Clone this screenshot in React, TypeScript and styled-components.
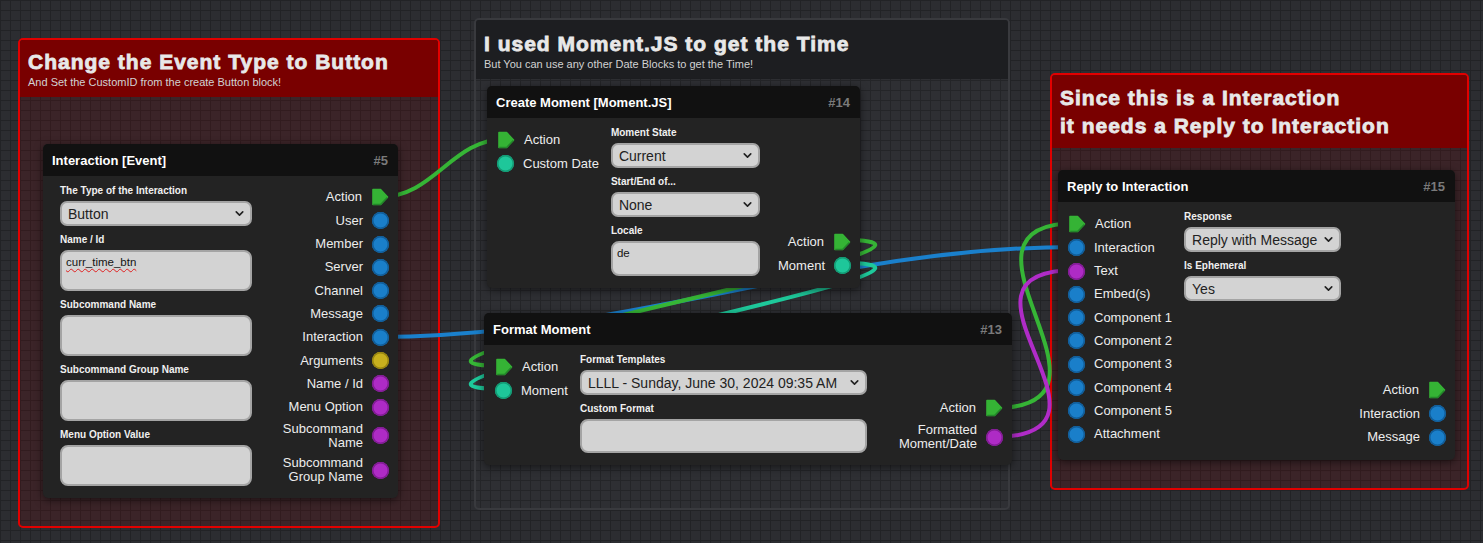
import React from 'react'
import styled, { createGlobalStyle } from 'styled-components'
import { ChevronDown } from 'lucide-react'

const FONT = `'Liberation Sans', Arial, sans-serif`

const GlobalStyle = createGlobalStyle`
  html, body {
    margin: 0;
    padding: 0;
    background: #292a2e;
  }
  body {
    font-family: ${FONT};
  }
`

type Kind = 'action' | 'blue' | 'teal' | 'purple' | 'yellow'

interface Pin {
  label: string
  kind: Kind
}

interface Field {
  label: string
  type: 'select' | 'text'
  value?: string
  height?: number
  misspelled?: boolean
}

const PIN_COLORS: Record<Exclude<Kind, 'action'>, [string, string]> = {
  blue: ['#1a7fca', '#115d99'],
  teal: ['#1ec79a', '#139a74'],
  purple: ['#ae2bc5', '#821c95'],
  yellow: ['#c8b01e', '#978410'],
}

const WIRE = {
  green: '#36b536',
  blue: '#1a80cc',
  teal: '#1ec99b',
  purple: '#b02cc8',
}

const interactionOutputs: Pin[] = [
  { label: 'Action', kind: 'action' },
  { label: 'User', kind: 'blue' },
  { label: 'Member', kind: 'blue' },
  { label: 'Server', kind: 'blue' },
  { label: 'Channel', kind: 'blue' },
  { label: 'Message', kind: 'blue' },
  { label: 'Interaction', kind: 'blue' },
  { label: 'Arguments', kind: 'yellow' },
  { label: 'Name / Id', kind: 'purple' },
  { label: 'Menu Option', kind: 'purple' },
  { label: 'Subcommand\nName', kind: 'purple' },
  { label: 'Subcommand\nGroup Name', kind: 'purple' },
]

const interactionFields: Field[] = [
  { label: 'The Type of the Interaction', type: 'select', value: 'Button' },
  { label: 'Name / Id', type: 'text', value: 'curr_time_btn', height: 41, misspelled: true },
  { label: 'Subcommand Name', type: 'text', height: 41 },
  { label: 'Subcommand Group Name', type: 'text', height: 41 },
  { label: 'Menu Option Value', type: 'text', height: 41 },
]

const replyInputs: Pin[] = [
  { label: 'Action', kind: 'action' },
  { label: 'Interaction', kind: 'blue' },
  { label: 'Text', kind: 'purple' },
  { label: 'Embed(s)', kind: 'blue' },
  { label: 'Component 1', kind: 'blue' },
  { label: 'Component 2', kind: 'blue' },
  { label: 'Component 3', kind: 'blue' },
  { label: 'Component 4', kind: 'blue' },
  { label: 'Component 5', kind: 'blue' },
  { label: 'Attachment', kind: 'blue' },
]

function wirePath(x1: number, y1: number, x2: number, y2: number, d: number) {
  return `M${x1} ${y1} C${x1 + d} ${y1}, ${x2 - d} ${y2}, ${x2} ${y2}`
}

const Socket: React.FC<{ kind: Kind }> = ({ kind }) => {
  if (kind === 'action') {
    return (
      <PinSvg width="18" height="18" viewBox="0 0 18 18">
        <path d="M2 1.5 H9.5 L16.5 9 L9.5 16.5 H2 Z" fill="#35b335" stroke="#35b335" strokeWidth="1.6" strokeLinejoin="round" />
        <path d="M16.3 9.4 L9.6 16.4 H2.2" fill="none" stroke="#23862a" strokeWidth="1.4" strokeLinejoin="round" />
      </PinSvg>
    )
  }
  const [fill, rim] = PIN_COLORS[kind]
  return <Dot $fill={fill} $rim={rim} />
}

const PinList: React.FC<{ pins: Pin[]; out?: boolean }> = ({ pins, out }) => (
  <>
    {pins.map((pin, i) => (
      <PinRow key={i}>
        {!out && <Socket kind={pin.kind} />}
        <PinLabel $out={out}>{pin.label}</PinLabel>
        {out && <Socket kind={pin.kind} />}
      </PinRow>
    ))}
  </>
)

const FieldList: React.FC<{ fields: Field[] }> = ({ fields }) => (
  <>
    {fields.map((f, i) => (
      <FieldGroup key={i}>
        <FieldLabel>{f.label}</FieldLabel>
        {f.type === 'select' ? (
          <SelectWrap>
            <Select defaultValue={f.value}>
              <option>{f.value}</option>
            </Select>
            <Caret size={13} strokeWidth={3} />
          </SelectWrap>
        ) : (
          <TextBox $h={f.height || 35}>
            {f.misspelled ? <Misspelled>{f.value}</Misspelled> : f.value}
          </TextBox>
        )}
      </FieldGroup>
    ))}
  </>
)

interface NodeProps {
  id: number
  title: string
  x: number
  y: number
  w: number
  padLeft: number
  fieldsW: number
  inputs?: Pin[]
  fields: Field[]
  outputs: Pin[]
}

const FlowNode: React.FC<NodeProps> = ({ id, title, x, y, w, padLeft, fieldsW, inputs, fields, outputs }) => (
  <NodeBox $x={x} $y={y} $w={w}>
    <NodeHeader>
      <NodeTitle>{title}</NodeTitle>
      <NodeId>#{id}</NodeId>
    </NodeHeader>
    <NodeBody $pl={padLeft}>
      {inputs && (
        <InputCol>
          <PinList pins={inputs} />
        </InputCol>
      )}
      <FieldCol $w={fieldsW}>
        <FieldList fields={fields} />
      </FieldCol>
      <OutputCol>
        <PinList pins={outputs} out />
      </OutputCol>
    </NodeBody>
  </NodeBox>
)

const App: React.FC = () => {
  return (
    <>
      <GlobalStyle />
      <Canvas>
        <Group $x={18} $y={38} $w={422} $h={490} $red>
          <GroupHeader $red $h={57} $pt={10}>
            <GroupTitle>Change the Event Type to Button</GroupTitle>
            <GroupSubtitle>And Set the CustomID from the create Button block!</GroupSubtitle>
          </GroupHeader>
        </Group>

        <Group $x={474} $y={18} $w={536} $h={492}>
          <GroupHeader $h={59} $pt={12}>
            <GroupTitle>I used Moment.JS to get the Time</GroupTitle>
            <GroupSubtitle>But You can use any other Date Blocks to get the Time!</GroupSubtitle>
          </GroupHeader>
        </Group>

        <Group $x={1050} $y={73} $w={419} $h={417} $red>
          <GroupHeader $red $h={73} $pt={9}>
            <GroupTitle $tall>
              Since this is a Interaction
              <br />
              it needs a Reply to Interaction
            </GroupTitle>
          </GroupHeader>
        </Group>

        <Wires viewBox="0 0 1483 543">
          <path d={wirePath(380, 197, 506, 139, 55)} stroke={WIRE.green} />
          <path d={wirePath(378, 337, 1076, 247, 250)} stroke={WIRE.blue} />
          <path d={wirePath(843, 240, 503, 366, 190)} stroke={WIRE.green} />
          <path d={wirePath(843, 263, 503, 389, 190)} stroke={WIRE.teal} />
          <path d={wirePath(994, 408, 1077, 223, 150)} stroke={WIRE.green} />
          <path d={wirePath(994, 437, 1076, 270, 150)} stroke={WIRE.purple} />
        </Wires>

        <FlowNode
          id={5}
          title="Interaction [Event]"
          x={43}
          y={144}
          w={355}
          padLeft={17}
          fieldsW={192}
          fields={interactionFields}
          outputs={interactionOutputs}
        />

        <FlowNode
          id={14}
          title="Create Moment [Moment.JS]"
          x={487}
          y={86}
          w={373}
          padLeft={10}
          fieldsW={149}
          inputs={[
            { label: 'Action', kind: 'action' },
            { label: 'Custom Date', kind: 'teal' },
          ]}
          fields={[
            { label: 'Moment State', type: 'select', value: 'Current' },
            { label: 'Start/End of...', type: 'select', value: 'None' },
            { label: 'Locale', type: 'text', value: 'de', height: 35 },
          ]}
          outputs={[
            { label: 'Action', kind: 'action' },
            { label: 'Moment', kind: 'teal' },
          ]}
        />

        <FlowNode
          id={13}
          title="Format Moment"
          x={484}
          y={313}
          w={528}
          padLeft={11}
          fieldsW={287}
          inputs={[
            { label: 'Action', kind: 'action' },
            { label: 'Moment', kind: 'teal' },
          ]}
          fields={[
            { label: 'Format Templates', type: 'select', value: 'LLLL - Sunday, June 30, 2024 09:35 AM' },
            { label: 'Custom Format', type: 'text', height: 34 },
          ]}
          outputs={[
            { label: 'Action', kind: 'action' },
            { label: 'Formatted\nMoment/Date', kind: 'purple' },
          ]}
        />

        <FlowNode
          id={15}
          title="Reply to Interaction"
          x={1058}
          y={170}
          w={397}
          padLeft={10}
          fieldsW={157}
          inputs={replyInputs}
          fields={[
            { label: 'Response', type: 'select', value: 'Reply with Message' },
            { label: 'Is Ephemeral', type: 'select', value: 'Yes' },
          ]}
          outputs={[
            { label: 'Action', kind: 'action' },
            { label: 'Interaction', kind: 'blue' },
            { label: 'Message', kind: 'blue' },
          ]}
        />
      </Canvas>
    </>
  )
}

const Canvas = styled.div`
  position: relative;
  width: 1483px;
  height: 543px;
  overflow: hidden;
  background-color: #2c2d31;
  background-image: linear-gradient(#222326 1px, transparent 1px),
    linear-gradient(90deg, #222326 1px, transparent 1px);
  background-size: 10px 10px;
`

const Group = styled.div<{ $x: number; $y: number; $w: number; $h: number; $red?: boolean }>`
  position: absolute;
  left: ${p => p.$x}px;
  top: ${p => p.$y}px;
  width: ${p => p.$w}px;
  height: ${p => p.$h}px;
  box-sizing: border-box;
  z-index: 0;
  border: 2px solid ${p => (p.$red ? '#e20000' : '#393a3e')};
  border-radius: 5px;
  background: ${p => (p.$red ? 'rgba(125, 0, 0, 0.18)' : 'rgba(255, 255, 255, 0.012)')};
  overflow: hidden;
`

const GroupHeader = styled.div<{ $h: number; $pt: number; $red?: boolean }>`
  height: ${p => p.$h}px;
  box-sizing: border-box;
  padding: ${p => p.$pt}px 8px 0;
  background: ${p => (p.$red ? '#790000' : '#1d1e21')};
`

const GroupTitle = styled.div<{ $tall?: boolean }>`
  font-family: ${FONT};
  font-size: 21px;
  font-weight: bold;
  line-height: ${p => (p.$tall ? 28 : 24)}px;
  letter-spacing: 1px;
  color: #e8e8e8;
  -webkit-text-stroke: 0.8px #e8e8e8;
  white-space: nowrap;
`

const GroupSubtitle = styled.div`
  margin-top: 2px;
  font-family: ${FONT};
  font-size: 11px;
  line-height: 12px;
  color: #d2d2d2;
  white-space: nowrap;
`

const Wires = styled.svg`
  position: absolute;
  left: 0;
  top: 0;
  width: 1483px;
  height: 543px;
  z-index: 1;
  pointer-events: none;
  fill: none;
  stroke-width: 4;
  stroke-linecap: round;
`

const NodeBox = styled.div<{ $x: number; $y: number; $w: number }>`
  position: absolute;
  left: ${p => p.$x}px;
  top: ${p => p.$y}px;
  width: ${p => p.$w}px;
  z-index: 2;
  background: #232323;
  border-radius: 5px;
  box-shadow: 0 2px 8px rgba(0, 0, 0, 0.55);
  overflow: hidden;
`

const NodeHeader = styled.div`
  height: 32px;
  display: flex;
  align-items: center;
  justify-content: space-between;
  padding: 0 10px 0 9px;
  background: #111111;
`

const NodeTitle = styled.span`
  font: bold 13px ${FONT};
  color: #ffffff;
`

const NodeId = styled.span`
  font: bold 13px ${FONT};
  color: #7a7a7a;
`

const NodeBody = styled.div<{ $pl: number }>`
  display: flex;
  padding: 0 9px 0 ${p => p.$pl}px;
`

const InputCol = styled.div`
  display: flex;
  flex-direction: column;
  gap: 6.3px;
  padding: 13px 12px 17px 0;
`

const FieldCol = styled.div<{ $w: number }>`
  flex: none;
  width: ${p => p.$w}px;
  display: flex;
  flex-direction: column;
  gap: 7px;
  padding: 8px 0 12px;
`

const OutputCol = styled.div`
  flex: 1;
  display: flex;
  flex-direction: column;
  align-items: flex-end;
  justify-content: flex-end;
  gap: 6.3px;
  padding: 12px 0 14px;
`

const PinRow = styled.div`
  display: flex;
  align-items: center;
  gap: 9px;
  min-height: 17px;
`

const PinLabel = styled.span<{ $out?: boolean }>`
  font-family: ${FONT};
  font-size: 13px;
  line-height: 14px;
  color: #ededed;
  white-space: pre-line;
  text-align: ${p => (p.$out ? 'right' : 'left')};
`

const PinSvg = styled.svg`
  flex: none;
  display: block;
`

const Dot = styled.span<{ $fill: string; $rim: string }>`
  flex: none;
  width: 17px;
  height: 17px;
  border-radius: 50%;
  background: ${p => p.$fill};
  box-shadow: inset 0 0 0 1.5px ${p => p.$rim};
`

const FieldGroup = styled.div`
  display: flex;
  flex-direction: column;
`

const FieldLabel = styled.div`
  font: bold 10px/14px ${FONT};
  color: #f0f0f0;
  margin-bottom: 3px;
  white-space: nowrap;
`

const SelectWrap = styled.div`
  position: relative;
`

const Select = styled.select`
  appearance: none;
  display: block;
  width: 100%;
  height: 25px;
  box-sizing: border-box;
  border: 2px solid #a4a4a4;
  border-radius: 7px;
  background: #d3d3d3;
  font-family: ${FONT};
  font-size: 14px;
  color: #222222;
  padding: 0 14px 0 6px;
  outline: none;
`

const Caret = styled(ChevronDown)`
  position: absolute;
  right: 6px;
  top: 6px;
  color: #222222;
  pointer-events: none;
`

const TextBox = styled.div<{ $h: number }>`
  height: ${p => p.$h}px;
  box-sizing: border-box;
  border: 2px solid #a4a4a4;
  border-radius: 8px;
  background: #d3d3d3;
  padding: 3px 4px;
  font-family: ${FONT};
  font-size: 11.5px;
  line-height: 14px;
  color: #151515;
`

const Misspelled = styled.span`
  text-decoration: underline wavy #e02020;
  text-decoration-thickness: 1px;
  text-underline-offset: 2px;
`

export default App
